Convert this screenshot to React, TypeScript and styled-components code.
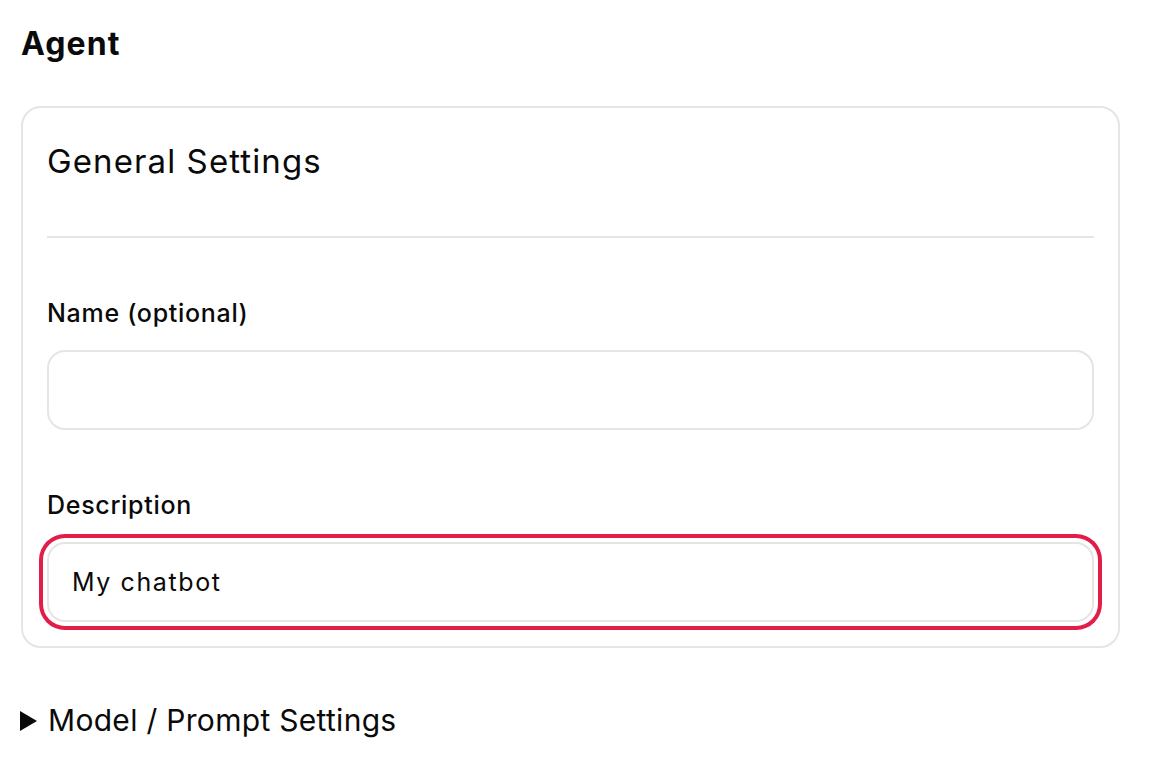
import React from 'react';
import styled, { createGlobalStyle } from 'styled-components';

const GlobalStyle = createGlobalStyle`
    html, body {
        margin: 0;
        padding: 0;
        background: #ffffff;
        color: #0a0a0a;
        font-family: Inter, 'Noto Sans', sans-serif;
    }
    * {
        box-sizing: border-box;
    }
`;

const Page = styled.div`
    padding: 26px 32px 40px 20px;
`;

const Title = styled.h1`
    margin: 0 0 44px 1px;
    font-size: 32px;
    line-height: 36px;
    font-weight: 700;
    letter-spacing: 1.1px;
`;

const Card = styled.section`
    border: 2px solid #e5e5e5;
    border-radius: 20px;
    padding: 8px 24px 24px 24px;
    margin-left: 1px;
`;

const CardHeader = styled.div`
    padding: 25px 0 55px 0;
    border-bottom: 2px solid #e5e5e5;
    margin-bottom: 59px;
`;

const CardTitle = styled.h2`
    margin: 0;
    font-size: 33px;
    line-height: 40px;
    font-weight: 400;
    letter-spacing: 1.1px;
`;

const Field = styled.div`
    display: flex;
    flex-direction: column;
    gap: 21px;
    & + & {
        margin-top: 59px;
    }
`;

const Label = styled.label`
    font-size: 25px;
    line-height: 32px;
    font-weight: 500;
    letter-spacing: 0.7px;
`;

const Input = styled.input<{ $focused?: boolean }>`
    display: block;
    width: 100%;
    height: 80px;
    border: 2px solid #e5e5e5;
    border-radius: 18px;
    padding: 0 23px;
    font-family: inherit;
    font-size: 25px;
    letter-spacing: 1.6px;
    color: #0a0a0a;
    background: #ffffff;
    outline: none;
    box-shadow: ${(p) => (p.$focused ? '0 0 0 4px #ffffff, 0 0 0 8px #e11d48' : 'none')};
`;

const Details = styled.details`
    margin-top: 54px;
    font-size: 30px;
    line-height: 36px;
    letter-spacing: 0.3px;
`;

const Summary = styled.summary`
    cursor: pointer;
    list-style: none;
    &::-webkit-details-marker {
        display: none;
    }
    &::before {
        content: '';
        display: inline-block;
        width: 0;
        height: 0;
        margin-right: 11px;
        border-left: 17px solid #0a0a0a;
        border-top: 10px solid transparent;
        border-bottom: 10px solid transparent;
    }
`;

export default function App() {
    return (
        <Page>
            <GlobalStyle />
            <Title>Agent</Title>
            <Card>
                <CardHeader>
                    <CardTitle>General Settings</CardTitle>
                </CardHeader>
                <Field>
                    <Label htmlFor="agent-name">Name (optional)</Label>
                    <Input id="agent-name" type="text" />
                </Field>
                <Field>
                    <Label htmlFor="agent-description">Description</Label>
                    <Input id="agent-description" type="text" defaultValue="My chatbot" $focused />
                </Field>
            </Card>
            <Details>
                <Summary>Model / Prompt Settings</Summary>
            </Details>
        </Page>
    );
}
